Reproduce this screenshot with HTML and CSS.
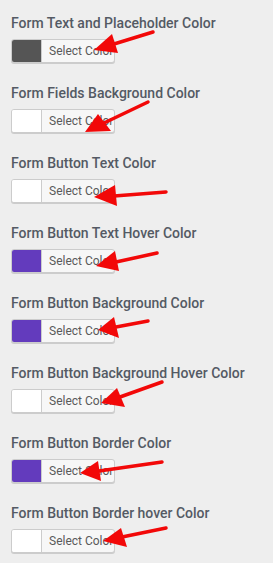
FILE: index.html
```html
<!DOCTYPE html>
<html lang="en">
<head>
  <meta charset="UTF-8" />
  <meta name="viewport" content="width=device-width, initial-scale=1.0" />
  <title>Form colors</title>
  <link rel="stylesheet" href="styles.css">
</head>
<body>

  <main class="color-list">

    <div class="field">
      <label>Form Text and Placeholder Color</label>
      <button class="picker"><span class="swatch swatch-dark"></span><span class="picker-text">Select Color</span></button>
    </div>

    <div class="field">
      <label>Form Fields Background Color</label>
      <button class="picker"><span class="swatch"></span><span class="picker-text">Select Color</span></button>
    </div>

    <div class="field">
      <label>Form Button Text Color</label>
      <button class="picker"><span class="swatch"></span><span class="picker-text">Select Color</span></button>
    </div>

    <div class="field">
      <label>Form Button Text Hover Color</label>
      <button class="picker"><span class="swatch swatch-purple"></span><span class="picker-text">Select Color</span></button>
    </div>

    <div class="field">
      <label>Form Button Background Color</label>
      <button class="picker"><span class="swatch swatch-purple"></span><span class="picker-text">Select Color</span></button>
    </div>

    <div class="field">
      <label>Form Button Background Hover Color</label>
      <button class="picker"><span class="swatch"></span><span class="picker-text">Select Color</span></button>
    </div>

    <div class="field">
      <label>Form Button Border Color</label>
      <button class="picker"><span class="swatch swatch-purple"></span><span class="picker-text">Select Color</span></button>
    </div>

    <div class="field">
      <label>Form Button Border hover Color</label>
      <button class="picker"><span class="swatch"></span><span class="picker-text">Select Color</span></button>
    </div>

  </main>

  <!-- red annotation arrows -->
  <svg class="arrows" width="273" height="563" viewBox="0 0 273 563">
    <g stroke="#f20808" stroke-width="3.5" stroke-linecap="round" fill="#f20808">
      <line x1="153" y1="32" x2="114" y2="44" />
      <polygon stroke="none" points="94,50 112,34 118,53" />

      <line x1="148" y1="102" x2="104" y2="123" />
      <polygon stroke="none" points="85,132 98,114 111,131" />

      <line x1="166" y1="192" x2="114" y2="196" />
      <polygon stroke="none" points="94,197 115,185 117,206" />

      <line x1="157" y1="253" x2="116" y2="262" />
      <polygon stroke="none" points="96,266 115,251 119,271" />

      <line x1="148" y1="321" x2="116" y2="327" />
      <polygon stroke="none" points="98,330 114,317 119,338" />

      <line x1="162" y1="382" x2="120" y2="397" />
      <polygon stroke="none" points="101,403 117,388 125,407" />

      <line x1="162" y1="462" x2="99" y2="471" />
      <polygon stroke="none" points="80,473 98,461 101,481" />

      <line x1="166" y1="528" x2="122" y2="537" />
      <polygon stroke="none" points="103,541 121,528 127,547" />
    </g>
  </svg>

</body>
</html>
```

FILE: styles.css
```css
* { margin: 0; padding: 0; box-sizing: border-box; }
body {
  position: relative;
  background: #eeeeee;
  color: #545a64;
  font-family: Roboto, 'Liberation Sans', sans-serif;
  width: 273px;
  height: 563px;
  overflow: hidden;
}

.color-list {
  display: flex;
  flex-direction: column;
  padding-left: 11px;
}

.field {
  display: flex;
  flex-direction: column;
  align-items: flex-start;
  height: 70px;
  padding-top: 15px;
}
.field label {
  font-size: 14px;
  font-weight: 500;
  line-height: 17px;
  color: #545a64;
  margin-bottom: 7px;
}

.picker {
  display: flex;
  align-items: stretch;
  width: 104px;
  height: 24px;
  background: #f7f7f7;
  border: 1px solid #cccccc;
  border-radius: 3px;
  box-shadow: 0 1px 0 #cccccc;
  overflow: hidden;
  font-family: Roboto, 'Liberation Sans', sans-serif;
  cursor: pointer;
}
.swatch {
  width: 30px;
  background: #ffffff;
  border-right: 1px solid #cccccc;
}
.swatch-dark { background: #555555; }
.swatch-purple { background: #633bbd; }
.picker-text {
  display: flex;
  align-items: center;
  padding-left: 7px;
  font-size: 12px;
  color: #5a5a5a;
}

/* annotation overlay */
.arrows {
  position: absolute;
  top: 0;
  left: 0;
  pointer-events: none;
}
```
